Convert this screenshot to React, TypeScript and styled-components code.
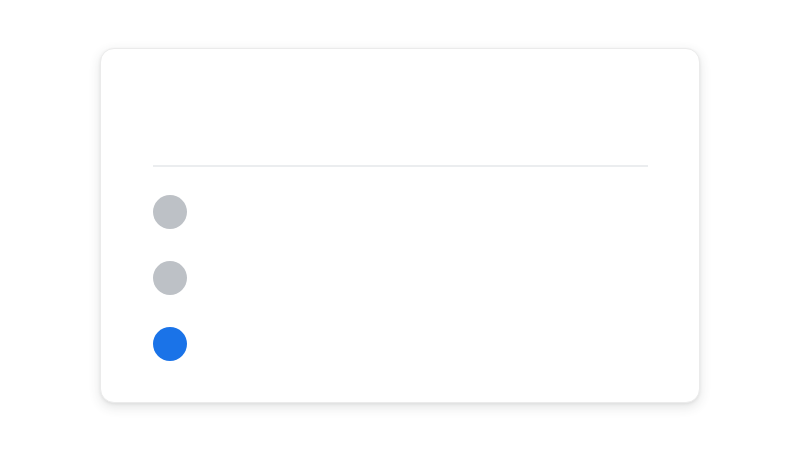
import React from 'react';
import styled, { createGlobalStyle } from 'styled-components';

const GlobalStyle = createGlobalStyle`
  html, body {
    margin: 0;
    padding: 0;
    background: #ffffff;
    font-family: Roboto, "Liberation Sans", sans-serif;
  }
`;

const Page = styled.div`
  width: 800px;
  height: 450px;
  display: flex;
  align-items: center;
  justify-content: center;
`;

const Card = styled.div`
  box-sizing: border-box;
  width: 600px;
  height: 355px;
  background: #ffffff;
  border: 1px solid #ebebeb;
  border-radius: 14px;
  box-shadow: 0 4px 12px rgba(60, 64, 67, 0.14), 0 1px 3px rgba(60, 64, 67, 0.08);
  padding: 0 51px 0 52px;
  display: flex;
  flex-direction: column;
`;

const Header = styled.div`
  height: 116px;
`;

const Divider = styled.div`
  height: 2px;
  background: #ebedef;
`;

const List = styled.div`
  display: flex;
  flex-direction: column;
  gap: 32px;
  margin-top: 28px;
`;

const Row = styled.div`
  display: flex;
  align-items: center;
  height: 34px;
`;

const Dot = styled.div<{ $active?: boolean }>`
  width: 34px;
  height: 34px;
  border-radius: 50%;
  background: ${(p) => (p.$active ? '#1a73e8' : '#bdc1c6')};
`;

const App = () => {
  const items = [false, false, true];
  return (
    <>
      <GlobalStyle />
      <Page>
        <Card>
          <Header />
          <Divider />
          <List>
            {items.map((active, i) => (
              <Row key={i}>
                <Dot $active={active} />
              </Row>
            ))}
          </List>
        </Card>
      </Page>
    </>
  );
};

export default App;
